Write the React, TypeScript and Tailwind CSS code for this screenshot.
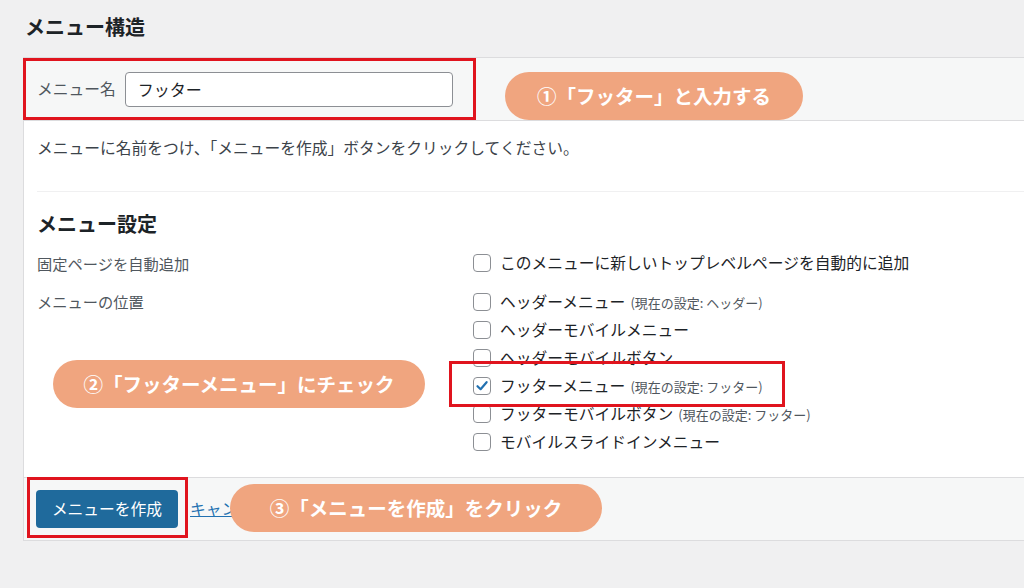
const jp = { fontFamily: '"Noto Sans CJK JP", "Noto Sans", sans-serif' };

function Box({ checked = false }: { checked?: boolean }) {
  return (
    <span className="flex h-[18px] w-[18px] shrink-0 items-center justify-center rounded-[4px] border border-[#8c8f94] bg-white">
      {checked && (
        <svg width="14" height="14" viewBox="0 0 14 14" fill="none">
          <path d="M2.5 7.2 L5.6 10.2 L11.6 3.2" stroke="#2271b1" strokeWidth="2.2" strokeLinecap="round" strokeLinejoin="round" />
        </svg>
      )}
    </span>
  );
}

const locations = [
  { name: 'ヘッダーメニュー', note: '(現在の設定: ヘッダー)' },
  { name: 'ヘッダーモバイルメニュー' },
  { name: 'ヘッダーモバイルボタン' },
  { name: 'フッターメニュー', note: '(現在の設定: フッター)', checked: true },
  { name: 'フッターモバイルボタン', note: '(現在の設定: フッター)' },
  { name: 'モバイルスライドインメニュー' },
];

export default function App() {
  return (
    <div className="relative h-[588px] w-[1024px] overflow-hidden bg-[#f0f0f1] text-[#1d2327]" style={jp}>
      <h1 className="pl-[25px] pt-[14px] text-[20px] font-bold leading-[26px] h-[57px]">メニュー構造</h1>

      {/* panel */}
      <div className="ml-[23px] w-[1020px] border border-[#dcdcde]">
        <div className="flex h-[63px] items-center gap-[9px] border-b border-[#dcdcde] bg-[#f6f7f7] pl-[13px]">
          <span className="text-[15.75px] text-[#50575e]">メニュー名</span>
          <div className="flex h-[35px] w-[328px] items-center rounded-[4px] border border-[#8c8f94] bg-white px-[12px] text-[16px]">
            フッター
          </div>
        </div>

        <div className="bg-white px-[13px] pb-[21px]">
          <p className="pt-[16px] text-[15.75px] leading-[22px] text-[#3c434a]">
            メニューに名前をつけ、「メニューを作成」ボタンをクリックしてください。
          </p>
          <div className="mt-[32px] h-px bg-[#f0f0f1]" />
          <h2 className="mt-[19px] text-[20px] font-bold leading-[26px]">メニュー設定</h2>

          <div className="mt-[13px] flex h-[26px] items-center">
            <span className="w-[436px] text-[15.25px] text-[#50575e]">固定ページを自動追加</span>
            <div className="flex items-center gap-[9px]">
              <Box />
              <span className="text-[15.75px]">このメニューに新しいトップレベルページを自動的に追加</span>
            </div>
          </div>

          <div className="mt-[12px] flex">
            <span className="w-[436px] pt-[1px] text-[15.25px] leading-[24px] text-[#50575e]">メニューの位置</span>
            <div className="flex flex-col">
              {locations.map((l) => (
                <div key={l.name} className="flex h-[28px] items-center gap-[9px]">
                  <Box checked={l.checked} />
                  <span className="text-[15.75px]">
                    {l.name}
                    {l.note && <span className="ml-[5px] text-[13px] text-[#50575e]">{l.note}</span>}
                  </span>
                </div>
              ))}
            </div>
          </div>
        </div>

        <div className="flex h-[63px] items-center gap-[12px] border-t border-[#dcdcde] bg-[#f6f7f7] pl-[12px]">
          <button className="h-[38px] w-[142px] rounded-[4px] bg-[#1f6a9c] text-[15.75px] text-white">メニューを作成</button>
          <a className="text-[15.75px] text-[#2271b1] underline">キャンセル</a>
        </div>
      </div>

      {/* annotations */}
      <div className="absolute left-[23px] top-[58px] h-[62px] w-[453px] border-[3px] border-[#e0141e]" />
      <div className="absolute left-[449px] top-[361px] h-[46px] w-[336px] border-[3px] border-[#e0141e]" />
      <div className="absolute left-[27px] top-[477px] h-[61px] w-[161px] border-[3px] border-[#e0141e]" />

      <div className="absolute left-[505px] top-[72px] flex h-[48px] w-[298px] items-center justify-center rounded-full bg-[#f0a57f] text-[19.5px] font-bold text-white">
        ①「フッター」と入力する
      </div>
      <div className="absolute left-[53px] top-[360px] flex h-[48px] w-[372px] items-center justify-center rounded-full bg-[#f0a57f] text-[19.5px] font-bold text-white">
        ②「フッターメニュー」にチェック
      </div>
      <div className="absolute left-[230px] top-[484px] flex h-[48px] w-[372px] items-center justify-center rounded-full bg-[#f0a57f] text-[19.5px] font-bold text-white">
        ③「メニューを作成」をクリック
      </div>
    </div>
  );
}
